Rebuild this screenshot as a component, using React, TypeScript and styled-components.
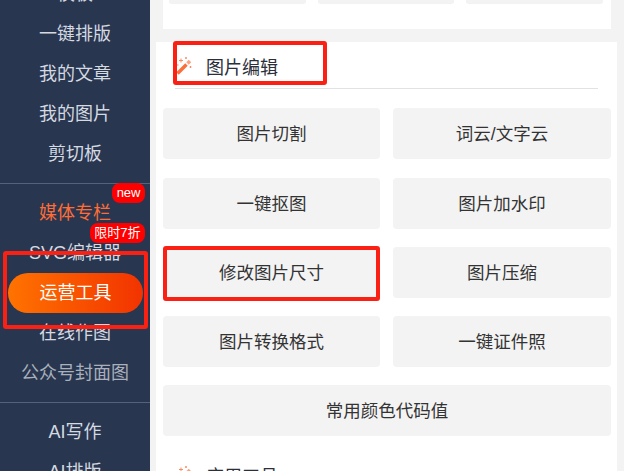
import styled, { createGlobalStyle } from "styled-components";

const Global = createGlobalStyle`
  html, body {
    margin: 0;
    padding: 0;
    height: 471px;
    overflow: hidden;
    background: #f3f3f3;
    font-family: "Liberation Sans", "Noto Sans CJK SC", sans-serif;
  }
`;
const Page = styled.div`
  display: flex;
  width: 624px;
  height: 471px;
  overflow: hidden;
`;
const Sidebar = styled.nav`
  width: 150px;
  height: 471px;
  flex: none;
  background: #283650;
  overflow: hidden;
`;
const NavGroup = styled.div<{ $top?: number }>`
  margin-top: ${(p) => p.$top ?? 0}px;
  padding: ${(p) => (p.$top ? 0 : 9)}px 0 9px;
  border-bottom: 1px solid #56627a;
  &:last-child {
    border-bottom: none;
  }
`;
const NavItem = styled.div<{ $color?: string }>`
  position: relative;
  height: 40px;
  line-height: 40px;
  text-align: center;
  font-size: 18px;
  color: ${(p) => p.$color ?? "#d5d9e0"};
`;
const ActiveItem = styled.div`
  position: relative;
  z-index: 2;
  margin: 0 7px 0 8px;
  height: 40px;
  line-height: 40px;
  border-radius: 20px;
  text-align: center;
  font-size: 18px;
  color: #fff;
  background: linear-gradient(90deg, #ff7300, #f23300);
`;
const Badge = styled.span`
  position: absolute;
  right: 5px;
  top: -10px;
  z-index: 3;
  height: 20px;
  line-height: 19px;
  padding: 0 4.5px;
  border-radius: 8px;
  background: #ff0000;
  color: #fff;
  font-size: 13px;
`;
const Main = styled.main`
  flex: 1;
  min-width: 0;
  padding-left: 6px;
`;
const TopCard = styled.section`
  width: 448px;
  margin-left: 7px;
  height: 29px;
  background: #fff;
  display: flex;
  gap: 12px;
  padding: 0 8px 0 6px;
  box-sizing: border-box;
`;
const TopButton = styled.div`
  flex: 1;
  height: 3px;
  background: #f3f3f3;
  border-radius: 0 0 4px 4px;
  box-shadow: 0 1px 1px rgba(0, 0, 0, 0.06);
`;
const Card = styled.section`
  width: 461px;
  height: 429px;
  margin-top: 13px;
  background: #fff;
  padding: 0 7px;
  box-sizing: border-box;
  overflow: hidden;
`;
const Heading = styled.div`
  display: flex;
  align-items: center;
  height: 44px;
  padding: 2px 0 0 1px;
  margin: 0 12px;
  border-bottom: 1px solid #e2e2e2;
  font-size: 18px;
  color: #2b2f3a;
`;
const HeadingIcon = styled.svg`
  width: 16px;
  height: 18px;
  margin: 0 14px 0 0;
  flex: none;
`;
const Tools = styled.div`
  display: grid;
  grid-template-columns: 217px 218px;
  column-gap: 13px;
  row-gap: 18.25px;
  margin-top: 19.4px;
`;
const Tool = styled.div<{ $wide?: boolean }>`
  grid-column: ${(p) => (p.$wide ? "1 / span 2" : "auto")};
  height: 51px;
  line-height: 52px;
  text-align: center;
  font-size: 17.5px;
  color: #333;
  background: #f3f3f3;
  border-radius: 4px;
`;
const NextHeading = styled(Heading)`
  margin-top: 15px;
  border-bottom: none;
`;
const Mark = styled.div<{ $l: number; $t: number; $w: number; $h: number }>`
  position: absolute;
  left: ${(p) => p.$l}px;
  top: ${(p) => p.$t}px;
  width: ${(p) => p.$w}px;
  height: ${(p) => p.$h}px;
  box-sizing: border-box;
  border: 4px solid #fb2014;
  border-radius: 3px;
  z-index: 5;
`;

function Wand() {
  return (
    <HeadingIcon viewBox="0 0 16 18">
      <path d="M1.5 16.5 L10.5 7.5" stroke="#f9703c" strokeWidth="3.6" />
      <path d="M11.5 6.5 L14 4" stroke="#f9a384" strokeWidth="3.6" />
      <path
        d="M3 3.5 h4 M5 1.5 v4 M9 1 h2 M10 0 v2 M13.5 10 h2 M14.5 9 v2 M1 8 h1.5"
        stroke="#f98a62"
        strokeWidth="1"
      />
    </HeadingIcon>
  );
}

const tools = [
  "图片切割",
  "词云/文字云",
  "一键抠图",
  "图片加水印",
  "修改图片尺寸",
  "图片压缩",
  "图片转换格式",
  "一键证件照",
];

export default function App() {
  return (
    <>
      <Global />
      <Page>
        <Sidebar>
          <NavGroup $top={-26}>
            <NavItem>模板</NavItem>
            <NavItem>一键排版</NavItem>
            <NavItem>我的文章</NavItem>
            <NavItem>我的图片</NavItem>
            <NavItem>剪切板</NavItem>
          </NavGroup>
          <NavGroup>
            <NavItem $color="#ff6d36">
              媒体专栏
              <Badge>new</Badge>
            </NavItem>
            <NavItem>
              SVG编辑器
              <Badge>限时7折</Badge>
            </NavItem>
            <ActiveItem>运营工具</ActiveItem>
            <NavItem>在线作图</NavItem>
            <NavItem $color="#a9b0bb">公众号封面图</NavItem>
          </NavGroup>
          <NavGroup>
            <NavItem>AI写作</NavItem>
            <NavItem>AI排版</NavItem>
          </NavGroup>
        </Sidebar>
        <Main>
          <TopCard>
            <TopButton />
            <TopButton />
            <TopButton />
          </TopCard>
          <Card>
            <Heading>
              <Wand />
              图片编辑
            </Heading>
            <Tools>
              {tools.map((t) => (
                <Tool key={t}>{t}</Tool>
              ))}
              <Tool $wide>常用颜色代码值</Tool>
            </Tools>
            <NextHeading>
              <Wand />
              应用工具
            </NextHeading>
          </Card>
        </Main>
        <Mark $l={3} $t={251} $w={145} $h={78} />
        <Mark $l={173} $t={41} $w={154} $h={44} />
        <Mark $l={163} $t={246} $w={217} $h={55} />
      </Page>
    </>
  );
}
